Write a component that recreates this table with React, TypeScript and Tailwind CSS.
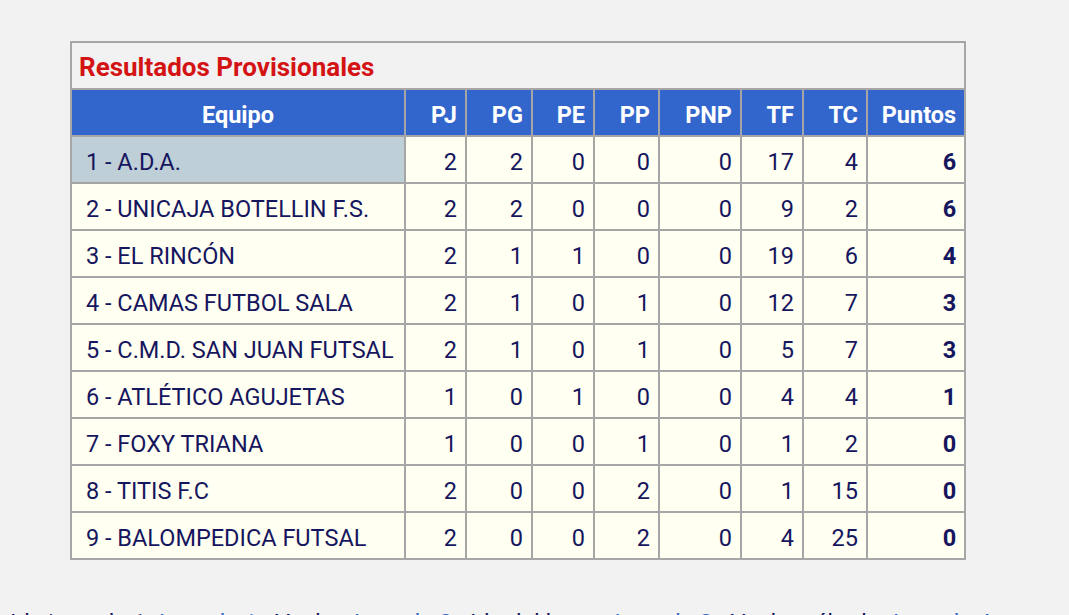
import React from 'react';

const rows = [
  { team: '1 - A.D.A.', pj: 2, pg: 2, pe: 0, pp: 0, pnp: 0, tf: 17, tc: 4, pts: 6 },
  { team: '2 - UNICAJA BOTELLIN F.S.', pj: 2, pg: 2, pe: 0, pp: 0, pnp: 0, tf: 9, tc: 2, pts: 6 },
  { team: '3 - EL RINCÓN', pj: 2, pg: 1, pe: 1, pp: 0, pnp: 0, tf: 19, tc: 6, pts: 4 },
  { team: '4 - CAMAS FUTBOL SALA', pj: 2, pg: 1, pe: 0, pp: 1, pnp: 0, tf: 12, tc: 7, pts: 3 },
  { team: '5 - C.M.D. SAN JUAN FUTSAL', pj: 2, pg: 1, pe: 0, pp: 1, pnp: 0, tf: 5, tc: 7, pts: 3 },
  { team: '6 - ATLÉTICO AGUJETAS', pj: 1, pg: 0, pe: 1, pp: 0, pnp: 0, tf: 4, tc: 4, pts: 1 },
  { team: '7 - FOXY TRIANA', pj: 1, pg: 0, pe: 0, pp: 1, pnp: 0, tf: 1, tc: 2, pts: 0 },
  { team: '8 - TITIS F.C', pj: 2, pg: 0, pe: 0, pp: 2, pnp: 0, tf: 1, tc: 15, pts: 0 },
  { team: '9 - BALOMPEDICA FUTSAL', pj: 2, pg: 0, pe: 0, pp: 2, pnp: 0, tf: 4, tc: 25, pts: 0 },
];

const numCell = 'border-2 border-[#a6a6a6] text-right pr-[8px] pt-[6px] bg-[#fffff2]';

export default function App() {
  return (
    <main className="h-screen bg-[#f2f2f2] font-['Roboto',sans-serif] text-[23.5px] text-[#16165e] overflow-hidden">
      <div className="pl-[70px] pt-[41px]">
        <table className="border-collapse table-fixed w-[894px]">
          <colgroup>
            <col className="w-[334px]" />
            <col className="w-[61px]" />
            <col className="w-[66px]" />
            <col className="w-[62px]" />
            <col className="w-[65px]" />
            <col className="w-[82px]" />
            <col className="w-[62px]" />
            <col className="w-[64px]" />
            <col className="w-[98px]" />
          </colgroup>
          <thead>
            <tr className="h-[47px]">
              <th colSpan={9} className="border-2 border-[#a6a6a6] text-left pl-[7px] pt-[3px] text-[26px] font-bold text-[#d41414] bg-[#f2f2f2]">
                Resultados Provisionales
              </th>
            </tr>
            <tr className="h-[47px] bg-[#3366cc] text-white font-bold">
              <th className="border-2 border-[#a6a6a6] text-center pt-[6px]">Equipo</th>
              {['PJ', 'PG', 'PE', 'PP', 'PNP', 'TF', 'TC', 'Puntos'].map((h) => (
                <th key={h} className="border-2 border-[#a6a6a6] text-right pr-[8px] pt-[6px]">{h}</th>
              ))}
            </tr>
          </thead>
          <tbody>
            {rows.map((r, i) => (
              <tr key={r.team} className="h-[47px]">
                <td className={`border-2 border-[#a6a6a6] pl-[14px] pt-[6px] whitespace-nowrap ${i === 0 ? 'bg-[#bfcfd7]' : 'bg-[#fffff2]'}`}>{r.team}</td>
                <td className={numCell}>{r.pj}</td>
                <td className={numCell}>{r.pg}</td>
                <td className={numCell}>{r.pe}</td>
                <td className={numCell}>{r.pp}</td>
                <td className={numCell}>{r.pnp}</td>
                <td className={numCell}>{r.tf}</td>
                <td className={numCell}>{r.tc}</td>
                <td className={`${numCell} font-bold`}>{r.pts}</td>
              </tr>
            ))}
          </tbody>
        </table>
      </div>
      <p className="mt-[46px] pl-[10px] whitespace-nowrap text-[23.5px] text-[#16165e]">
        Ida jornada 1 <span className="text-[#3366cc]">Jornada 1</span> · Vuelta <span className="text-[#3366cc]">Jornada 2</span> · Ida del lunes <span className="text-[#3366cc]">Jornada 3</span> · Vuelta sábado <span className="text-[#3366cc]">Jornada 4</span>
      </p>
    </main>
  );
}
